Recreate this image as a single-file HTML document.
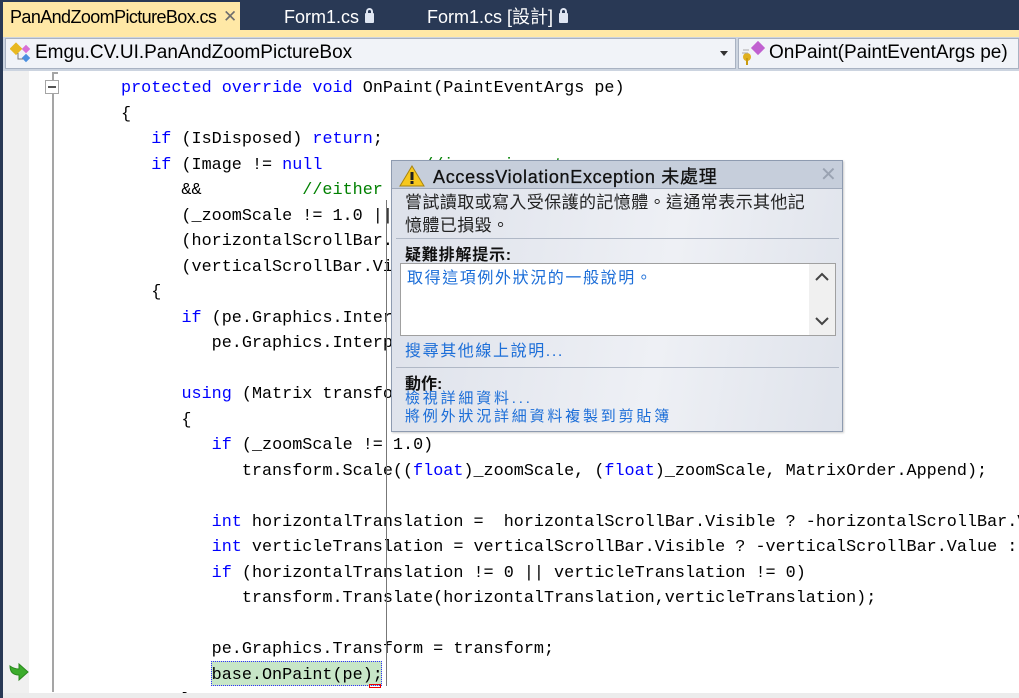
<!DOCTYPE html>
<html><head><meta charset="utf-8"><style>
*{margin:0;padding:0;box-sizing:border-box}
html,body{width:1019px;height:698px;overflow:hidden}
body{background:#293955;position:relative;font-family:"Liberation Sans","Noto Sans CJK TC",sans-serif}
.abs{position:absolute}
.tab{position:absolute;top:2px;height:30px;font-size:18px;line-height:30px;padding-left:8px;color:#fff;white-space:nowrap}
.lock{display:inline-block;width:9px;height:10px;background:#dfe6f2;border-radius:1px;margin-left:6px;position:relative;top:0px}
.lock:before{content:"";position:absolute;left:1px;top:-5px;width:7px;height:7px;border:2px solid #dfe6f2;border-bottom:none;border-radius:4px 4px 0 0;box-sizing:border-box}
pre{font-family:"Liberation Mono",monospace;font-size:16.8px;line-height:25.5px;color:#000}
.k{color:#0000ff}.c{color:#008000}
a{color:#1c6ed8;text-decoration:none}
</style></head><body>
<div class="abs" style="left:0;top:30px;width:1019px;height:7px;background:#ffe8a6"></div>
<div class="tab" style="left:2px;width:238px;background:#ffe8a6;color:#000;height:34px;top:2px;letter-spacing:-0.6px">PanAndZoomPictureBox.cs<span style="position:absolute;left:221px;top:0;color:#6d6d6d;font-size:17px">✕</span></div>
<div class="tab" style="left:276px">Form1.cs<span class="lock"></span></div>
<div class="tab" style="left:419px">Form1.cs [設計]<span class="lock"></span></div>
<div class="abs" style="left:3px;top:37px;width:1016px;height:34px;background:#ccd4e0"></div>
<div class="abs" style="left:5px;top:38px;width:731px;height:31px;background:#f1f3f8;border:1px solid #a9b2c2"></div>
<div class="abs" style="left:738px;top:38px;width:281px;height:31px;background:#f1f3f8;border:1px solid #a9b2c2"></div>
<svg class="abs" style="left:10px;top:41px" width="24" height="24"><rect x="2" y="3" width="9" height="9" fill="#e8b820" transform="rotate(45 6 7)"/><rect x="13" y="5" width="6" height="6" fill="#d86fd6" transform="rotate(45 16 8)"/><rect x="13" y="14" width="6" height="6" fill="#4a8fe0" transform="rotate(45 16 17)"/><path d="M8 12v6h5" stroke="#777" fill="none"/></svg>
<div class="abs" style="left:35px;top:42px;font-size:19px;color:#000">Emgu.CV.UI.PanAndZoomPictureBox</div>
<div class="abs" style="left:720px;top:51px;border:4px solid transparent;border-top:5px solid #333;border-bottom:none"></div>
<svg class="abs" style="left:741px;top:40px" width="28" height="26"><circle cx="6" cy="17" r="4" fill="#e0b020"/><rect x="5" y="18" width="2" height="7" fill="#c99a10"/><path d="M2 10h6M1 13h6" stroke="#aaa"/><rect x="12" y="3" width="10" height="10" fill="#c060d0" transform="rotate(45 17 8)"/></svg>
<div class="abs" style="left:769px;top:42px;font-size:19px;color:#000">OnPaint(PaintEventArgs pe)</div>
<div class="abs" style="left:3px;top:71px;width:1016px;height:627px;background:#fff"></div>
<div class="abs" style="left:3px;top:71px;width:26px;height:622px;background:#f0f0f0"></div>
<div class="abs" style="left:52px;top:72px;width:2px;height:620px;background:#a5a5a5"></div>
<div class="abs" style="left:52px;top:72px;width:6px;height:2px;background:#a5a5a5"></div>
<div class="abs" style="left:45px;top:80px;width:14px;height:14px;background:#fff;border:1px solid #a5a5a5"></div>
<div class="abs" style="left:48px;top:86px;width:8px;height:2px;background:#555"></div>
<svg class="abs" style="left:8px;top:662px" width="22" height="20"><path d="M2 4 Q2 13 11 13 V18 L20 10 L11 2 V7 Q6 7 2 4Z" fill="#3cac2c" stroke="#2a8a1e"/></svg>
<div class="abs" style="left:211px;top:661px;width:171px;height:25px;background:#c7e6c7;border:1px dotted #3030ff"></div>
<div class="abs" style="left:369px;top:684px;width:12px;height:4px;border:1px solid #e00"></div>
<pre class="abs" style="left:121px;top:76px;height:617px;overflow:hidden">
<span class="k">protected</span> <span class="k">override</span> <span class="k">void</span> OnPaint(PaintEventArgs pe)
{
   <span class="k">if</span> (IsDisposed) <span class="k">return</span>;
   <span class="k">if</span> (Image != <span class="k">null</span>          <span class="c">//image is not</span>
      &amp;&amp;          <span class="c">//either</span>
      (_zoomScale != 1.0 ||
      (horizontalScrollBar.Visible
      (verticalScrollBar.Visible
   {
      <span class="k">if</span> (pe.Graphics.Interpolation
         pe.Graphics.Interpolation

      <span class="k">using</span> (Matrix transform
      {
         <span class="k">if</span> (_zoomScale != 1.0)
            transform.Scale((<span class="k">float</span>)_zoomScale, (<span class="k">float</span>)_zoomScale, MatrixOrder.Append);

         <span class="k">int</span> horizontalTranslation =  horizontalScrollBar.Visible ? -horizontalScrollBar.Value : 0;
         <span class="k">int</span> verticleTranslation = verticalScrollBar.Visible ? -verticalScrollBar.Value : 0;
         <span class="k">if</span> (horizontalTranslation != 0 || verticleTranslation != 0)
            transform.Translate(horizontalTranslation,verticleTranslation);

         pe.Graphics.Transform = transform;
         base.OnPaint(pe);
      }
</pre>
<div class="abs" style="left:386px;top:200px;width:1px;height:486px;background:#777"></div>
<div class="abs" style="left:3px;top:693px;width:1016px;height:5px;background:#ececec"></div>
<div class="abs" style="left:391px;top:160px;width:452px;height:272px;border:1px solid #8e9bb0;background:linear-gradient(100deg,#dde1ea,#eef0f5 60%,#dfe3eb);box-shadow:1px 1px 2px rgba(0,0,0,.2);overflow:hidden">
 <div class="abs" style="left:0;top:0;width:450px;height:28px;background:#c6cedb;border-bottom:1px solid #a0aabb"></div>
 <svg class="abs" style="left:7px;top:4px" width="26" height="22"><path d="M13 1 L25 21 H1Z" fill="#f7c81e" stroke="#a88410"/><rect x="11.5" y="7" width="3" height="8" fill="#222"/><rect x="11.5" y="16" width="3" height="3" fill="#222"/></svg>
 <div class="abs" style="left:41px;top:2px;font-size:18px;letter-spacing:0.7px;color:#111;white-space:nowrap;-webkit-text-stroke:0.3px #111">AccessViolationException 未處理</div>
 <div class="abs" style="left:428px;top:1px;font-size:20px;color:#9aa3b2">✕</div>
 <div class="abs" style="left:13px;top:30px;font-size:17px;letter-spacing:0.4px;line-height:23px;color:#222;width:402px">嘗試讀取或寫入受保護的記憶體。這通常表示其他記憶體已損毀。</div>
 <div class="abs" style="left:4px;top:77px;width:443px;height:1px;background:#b0b8c6"></div>
 <div class="abs" style="left:13px;top:80px;font-size:16px;letter-spacing:0.8px;font-weight:bold;color:#111">疑難排解提示:</div>
 <div class="abs" style="left:8px;top:102px;width:436px;height:73px;background:#fff;border:1px solid #a0a0a0">
  <div class="abs" style="left:6px;top:0px;font-size:16px;letter-spacing:1.6px;white-space:nowrap"><a>取得這項例外狀況的一般說明。</a></div>
  <div class="abs" style="right:0;top:0;width:26px;height:71px;background:#f0f0f0"></div>
  <svg class="abs" style="right:6px;top:8px" width="14" height="10"><path d="M1 8 L7 2 L13 8" stroke="#444" stroke-width="2" fill="none"/></svg>
  <svg class="abs" style="right:6px;top:52px" width="14" height="10"><path d="M1 2 L7 8 L13 2" stroke="#444" stroke-width="2" fill="none"/></svg>
 </div>
 <div class="abs" style="left:13px;top:176px;font-size:16px;letter-spacing:1.6px;white-space:nowrap"><a>搜尋其他線上說明...</a></div>
 <div class="abs" style="left:4px;top:206px;width:443px;height:1px;background:#b0b8c6"></div>
 <div class="abs" style="left:13px;top:209px;font-size:16px;font-weight:bold;color:#111">動作:</div>
 <div class="abs" style="left:13px;top:229px;font-size:15px;letter-spacing:2.8px;line-height:18px;white-space:nowrap"><a>檢視詳細資料...</a><br><a>將例外狀況詳細資料複製到剪貼簿</a></div>
</div>
<div class="abs" style="left:0;top:0;width:3px;height:698px;background:#293955"></div>
</body></html>
